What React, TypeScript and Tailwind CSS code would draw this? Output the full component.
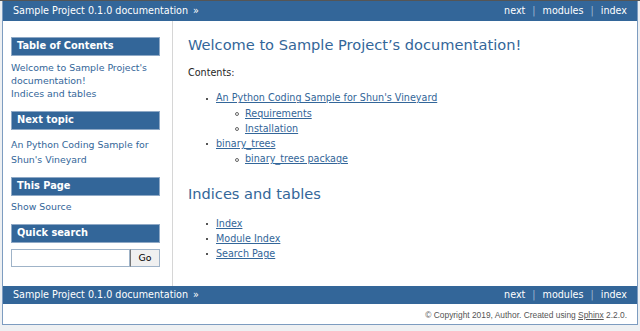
import React from "react";

function NavBar({ h }: { h: string }) {
  return (
    <div className={`${h} bg-[#336699] flex items-center justify-between pl-[10px] pr-[10px] text-white text-[9.6px]`}>
      <div className="flex items-center">
        <span>Sample Project 0.1.0 documentation</span>
        <span className="ml-[5px]">»</span>
      </div>
      <div className="flex items-center">
        <span>next</span>
        <span className="mx-[7px] text-[#9fb7d0]">|</span>
        <span>modules</span>
        <span className="mx-[7px] text-[#9fb7d0]">|</span>
        <span>index</span>
      </div>
    </div>
  );
}

function SideHead({ children }: { children: React.ReactNode }) {
  return (
    <div className="ml-[8px] w-[149px] h-[19px] bg-[#336699] border border-[#8fa9c6] flex items-center pl-[5px] text-white font-bold text-[9.8px]">
      {children}
    </div>
  );
}

function Bullet() {
  return <span className="inline-block w-[2px] h-[2px] bg-[#555] ml-[18px] mr-[8px]" />;
}
function SubBullet() {
  return <span className="inline-block w-[4px] h-[4px] rounded-full border border-[#666] ml-[47px] mr-[6px]" />;
}

function Item({ children, sub }: { children: React.ReactNode; sub?: boolean }) {
  return (
    <div className="flex items-center h-[15.25px]">
      {sub ? <SubBullet /> : <Bullet />}
      <a className="text-[#336699] underline decoration-[#336699] underline-offset-[1px]">{children}</a>
    </div>
  );
}

export default function App() {
  return (
    <div
      className="w-[640px] h-[331px] bg-[#eef0f2] overflow-hidden text-[#1f1f1f]"
      style={{ fontFamily: '"DejaVu Sans", sans-serif' }}
    >
      <div className="h-[1px] bg-[#555]" />
      <div className="ml-[2px] w-[636px] border-x border-b border-[#7d9cc0] bg-white">
        <NavBar h="h-[20px]" />
        <div className="flex h-[265px]">
          <div className="w-[170px] border-r border-[#d6d6d6] pt-[16px] text-[9.4px]">
            <SideHead>Table of Contents</SideHead>
            <div className="ml-[8px] mt-[5px] leading-[13px] text-[#336699]">
              <div>Welcome to Sample Project's</div>
              <div>documentation!</div>
              <div>Indices and tables</div>
            </div>
            <div className="mt-[11px]">
              <SideHead>Next topic</SideHead>
            </div>
            <div className="ml-[8px] mt-[7px] leading-[15px] text-[#336699]">
              <div>An Python Coding Sample for</div>
              <div>Shun's Vineyard</div>
            </div>
            <div className="mt-[10px]">
              <SideHead>This Page</SideHead>
            </div>
            <div className="ml-[8px] mt-[4px] leading-[14px] text-[#336699]">Show Source</div>
            <div className="mt-[10px]">
              <SideHead>Quick search</SideHead>
            </div>
            <div className="ml-[8px] mt-[6px] flex h-[18px]">
              <div className="w-[119px] h-[18px] border border-[#9fb3c8] bg-white" />
              <div className="w-[30px] h-[18px] border border-[#9fb3c8] border-l-[#777] bg-[#f0f0f0] flex items-center justify-center text-[9.4px] text-black">
                Go
              </div>
            </div>
          </div>
          <div className="flex-1 pl-[15px] pt-[14px]">
            <h1 className="text-[14.6px] leading-[20px] text-[#336699]">
              Welcome to Sample Project’s documentation!
            </h1>
            <div className="mt-[11px] text-[9.6px] leading-[14px]">Contents:</div>
            <div className="mt-[11px] text-[9.6px]">
              <Item>An Python Coding Sample for Shun's Vineyard</Item>
              <Item sub>Requirements</Item>
              <Item sub>Installation</Item>
              <Item>binary_trees</Item>
              <Item sub>binary_trees package</Item>
            </div>
            <h2 className="mt-[17px] text-[14.6px] leading-[20px] text-[#336699]">Indices and tables</h2>
            <div className="mt-[12px] text-[9.6px]">
              <Item>Index</Item>
              <Item>Module Index</Item>
              <Item>Search Page</Item>
            </div>
          </div>
        </div>
        <NavBar h="h-[18px]" />
        <div
          className="h-[20px] flex items-center justify-end pr-[10px] pt-[2px] text-[8.4px] text-[#555]"
          style={{ fontFamily: '"Liberation Sans", sans-serif' }}
        >
          <span>
            © Copyright 2019, Author. Created using <span className="underline">Sphinx</span> 2.2.0.
          </span>
        </div>
      </div>
    </div>
  );
}
